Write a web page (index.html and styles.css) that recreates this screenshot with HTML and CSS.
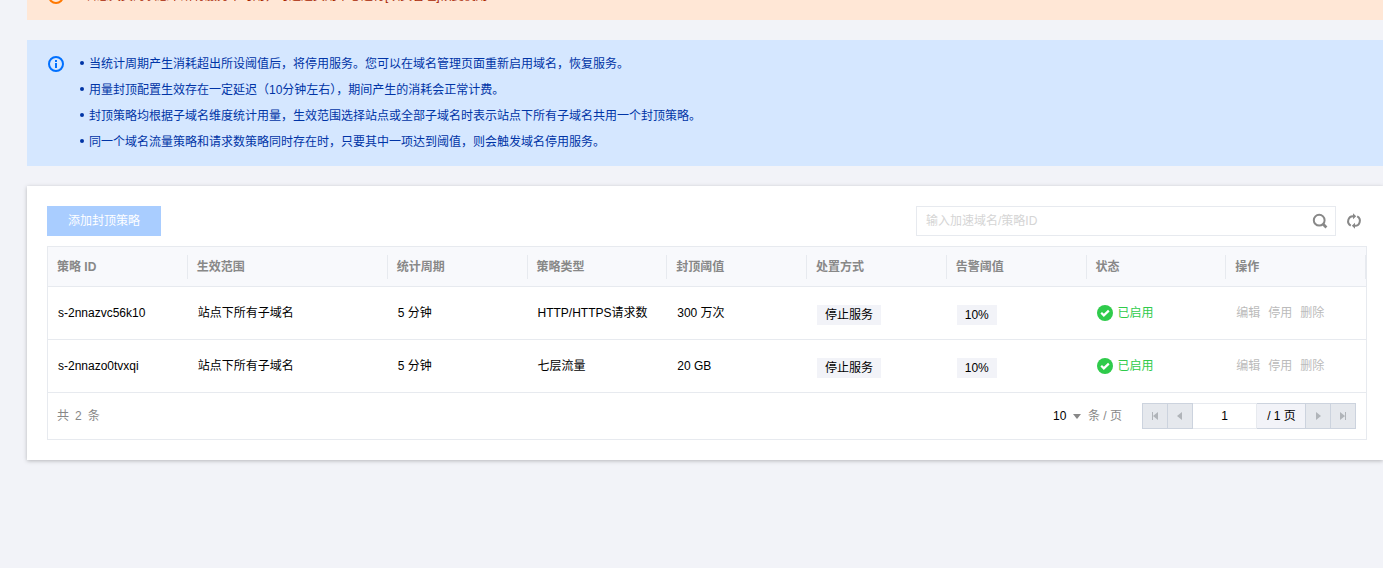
FILE: index.html
```html
<!DOCTYPE html>
<html lang="zh-CN">
<head>
<meta charset="utf-8">
<title>用量封顶策略</title>
<link rel="stylesheet" href="styles.css">
</head>
<body>
<main class="page">
  <section class="notice notice-warning">
    <svg class="notice-icon" viewBox="0 0 16 16" aria-hidden="true"><circle cx="8" cy="8" r="7" fill="none" stroke="currentColor" stroke-width="2"/><path d="M7 4h2v5H7zM7 10h2v2H7z" fill="currentColor"/></svg>
    <p class="notice-text">若您欠费的状态下所有服务不可用，可通过费用中心进行[续费管理]恢复使用</p>
  </section>

  <section class="notice notice-info">
    <svg class="notice-icon" viewBox="0 0 16 16" aria-hidden="true"><circle cx="8" cy="8" r="7" fill="none" stroke="currentColor" stroke-width="2"/><path d="M7 4h2v2H7zM7 7h2v5H7z" fill="currentColor"/></svg>
    <ul class="notice-list">
      <li>当统计周期产生消耗超出所设阈值后，将停用服务。您可以在域名管理页面重新启用域名，恢复服务。</li>
      <li>用量封顶配置生效存在一定延迟（10分钟左右），期间产生的消耗会正常计费。</li>
      <li>封顶策略均根据子域名维度统计用量，生效范围选择站点或全部子域名时表示站点下所有子域名共用一个封顶策略。</li>
      <li>同一个域名流量策略和请求数策略同时存在时，只要其中一项达到阈值，则会触发域名停用服务。</li>
    </ul>
  </section>

  <section class="card">
    <div class="toolbar">
      <button class="btn-primary" type="button" disabled>添加封顶策略</button>
      <div class="tools">
        <div class="search">
          <input class="search-input" type="text" aria-label="搜索" placeholder="输入加速域名/策略ID">
          <button class="icon-btn" type="button" aria-label="搜索"><svg width="16" height="16" viewBox="0 0 16 16"><circle cx="7.2" cy="7.2" r="5.4" fill="none" stroke="#888" stroke-width="2"/><path d="M11 11l3.4 3.4" stroke="#888" stroke-width="2.8"/></svg></button>
        </div>
        <button class="icon-btn" type="button" aria-label="刷新"><svg width="16" height="16" viewBox="0 0 16 16"><path d="M4.8 12.6A5 5 0 0 1 7.5 3.2M11.2 3.4A5 5 0 0 1 8.5 12.8" fill="none" stroke="#888" stroke-width="2"/><path d="M7 .2l3.2 3L7 6.2zM9 9.8l-3.2 3 3.2 3z" fill="#888"/></svg></button>
      </div>
    </div>

    <div class="table-box">
      <table class="table">
        <colgroup><col><col class="col-wide"><col><col><col><col><col><col><col></colgroup>
        <thead>
          <tr><th><span>策略 ID</span></th><th><span>生效范围</span></th><th><span>统计周期</span></th><th><span>策略类型</span></th><th><span>封顶阈值</span></th><th><span>处置方式</span></th><th><span>告警阈值</span></th><th><span>状态</span></th><th><span>操作</span></th></tr>
        </thead>
        <tbody>
          <tr>
            <td>s-2nnazvc56k10</td><td>站点下所有子域名</td><td>5 分钟</td><td>HTTP/HTTPS请求数</td><td>300 万次</td>
            <td><span class="tag">停止服务</span></td><td><span class="tag">10%</span></td>
            <td><span class="status"><svg width="16" height="16" viewBox="0 0 16 16" aria-hidden="true"><circle cx="8" cy="8" r="8" fill="#2fcb4b"/><path d="M4.2 7.8l2.6 2.6 5-4.8" fill="none" stroke="#fff" stroke-width="2.2"/></svg>已启用</span></td>
            <td><div class="actions"><button type="button" disabled>编辑</button><button type="button" disabled>停用</button><button type="button" disabled>删除</button></div></td>
          </tr>
          <tr>
            <td>s-2nnazo0tvxqi</td><td>站点下所有子域名</td><td>5 分钟</td><td>七层流量</td><td>20 GB</td>
            <td><span class="tag">停止服务</span></td><td><span class="tag">10%</span></td>
            <td><span class="status"><svg width="16" height="16" viewBox="0 0 16 16" aria-hidden="true"><circle cx="8" cy="8" r="8" fill="#2fcb4b"/><path d="M4.2 7.8l2.6 2.6 5-4.8" fill="none" stroke="#fff" stroke-width="2.2"/></svg>已启用</span></td>
            <td><div class="actions"><button type="button" disabled>编辑</button><button type="button" disabled>停用</button><button type="button" disabled>删除</button></div></td>
          </tr>
        </tbody>
      </table>

      <div class="footer">
        <div class="total"><span>共</span><span>2</span><span>条</span></div>
        <div class="paging">
          <label class="size"><select class="size-select" aria-label="每页条数"><option>10</option></select><svg width="8" height="5" viewBox="0 0 8 5" aria-hidden="true"><path d="M0 0h8L4 5z" fill="#888"/></svg><span>条 / 页</span></label>
          <nav class="pager" aria-label="分页">
            <button class="page-btn" type="button" disabled aria-label="首页"><svg width="8" height="8" viewBox="0 0 8 8"><path d="M1 0h1v8H1zM7 0v8L2 4z" fill="#b0b4b9"/></svg></button>
            <button class="page-btn" type="button" disabled aria-label="上一页"><svg width="8" height="8" viewBox="0 0 8 8"><path d="M6 0v8L1 4z" fill="#b0b4b9"/></svg></button>
            <input class="page-input" type="text" value="1" aria-label="页码">
            <span class="page-total">/ 1 页</span>
            <button class="page-btn" type="button" disabled aria-label="下一页"><svg width="8" height="8" viewBox="0 0 8 8"><path d="M2 0v8l5-4z" fill="#b0b4b9"/></svg></button>
            <button class="page-btn" type="button" disabled aria-label="末页"><svg width="8" height="8" viewBox="0 0 8 8"><path d="M6 0h1v8H6zM1 0v8l5-4z" fill="#b0b4b9"/></svg></button>
          </nav>
        </div>
      </div>
    </div>
  </section>
</main>
</body>
</html>
```
FILE: styles.css
```css
* { box-sizing: border-box; }
html { background: #f2f3f8; }
body {
  margin: 0;
  color: #000;
  font: 12px/18px "Liberation Sans", "Noto Sans CJK SC", sans-serif;
}
button, input, select { margin: 0; padding: 0; border: 0; background: none; color: inherit; font: inherit; }
svg { display: block; flex: none; }

/* The warning strip is partly scrolled out of view. */
.page { margin-top: -28px; padding: 0 0 20px 27px; }

.notice { display: flex; align-items: flex-start; margin-bottom: 20px; padding: 11px 20px; line-height: 26px; }
.notice-icon { width: 18px; height: 18px; margin-top: 4px; padding: 1px; }
.notice-warning { background: #ffe7d6; color: #a82400; }
.notice-warning .notice-icon { color: #ff7800; }
.notice-info { background: #d5e7ff; color: #0034a6; }
.notice-info .notice-icon { color: #0070ff; }
.notice-text { margin: 0 0 0 20px; }
.notice-list { margin: 0 0 0 15px; padding: 0; list-style: none; }
.notice-list li { display: flex; align-items: center; gap: 5px; }
.notice-list li::before { content: ""; flex: none; width: 4px; height: 4px; margin-bottom: 2px; border-radius: 50%; background: currentColor; }

.card { padding: 20px 16px 20px 20px; background: #fff; box-shadow: 0 1px 4px rgba(0, 0, 0, .25); }

.toolbar { display: flex; justify-content: space-between; align-items: center; margin-bottom: 10px; }
.btn-primary { height: 30px; padding: 0 21px; background: #a9cdff; color: #fff; }
.tools { display: flex; align-items: center; gap: 5px; }
.search { display: flex; align-items: center; width: 420px; height: 30px; padding: 0 2px 0 9px; border: 1px solid #e7eaef; }
.search-input { flex: 1; min-width: 0; height: 28px; outline: 0; }
.search-input::placeholder { color: #d5d5d5; }
.icon-btn { display: flex; align-items: center; justify-content: center; width: 26px; height: 28px; }

.table-box { border: 1px solid #e7eaef; }
.table { width: 100%; table-layout: fixed; border-collapse: separate; border-spacing: 0; }
.col-wide { width: 200px; }
.table th, .table td { padding: 0 0 0 10px; border-bottom: 1px solid #e7eaef; text-align: left; white-space: nowrap; }
.table th { height: 40px; padding: 0; background: #f8f9fc; color: #888; }
.table th span { display: block; height: 24px; padding-left: 9px; border-right: 1px solid #e7eaef; line-height: 24px; }
.table td { height: 53px; }
.tag { display: inline-block; height: 20px; margin-top: 3px; padding: 0 8px; background: #f2f3f8; line-height: 20px; vertical-align: middle; }
.status { display: flex; align-items: center; gap: 5px; color: #2fcb4b; }
.actions { display: flex; gap: 8px; color: #bbb; }

.footer { display: flex; align-items: center; justify-content: space-between; padding: 10px 10px 10px 9px; color: #888; }
.total { display: flex; gap: 6px; }
.paging, .size, .pager { display: flex; align-items: center; }
.paging { gap: 21px; }
.size-select { width: 20px; appearance: none; color: #000; }
.size span { margin-left: 7px; }
.pager { height: 26px; color: #000; }
.page-btn { display: flex; align-items: center; justify-content: center; width: 26px; height: 26px; margin-left: -1px; border: 1px solid #ccd3de; background: #e5e8ed; }
.page-input { width: 64px; height: 26px; border: 1px solid #e7eaef; border-left: 0; text-align: center; }
.page-total { width: 49px; height: 26px; border: 1px solid #ccd3de; border-width: 1px 0; background: #f2f3f8; line-height: 24px; text-align: center; }
```
